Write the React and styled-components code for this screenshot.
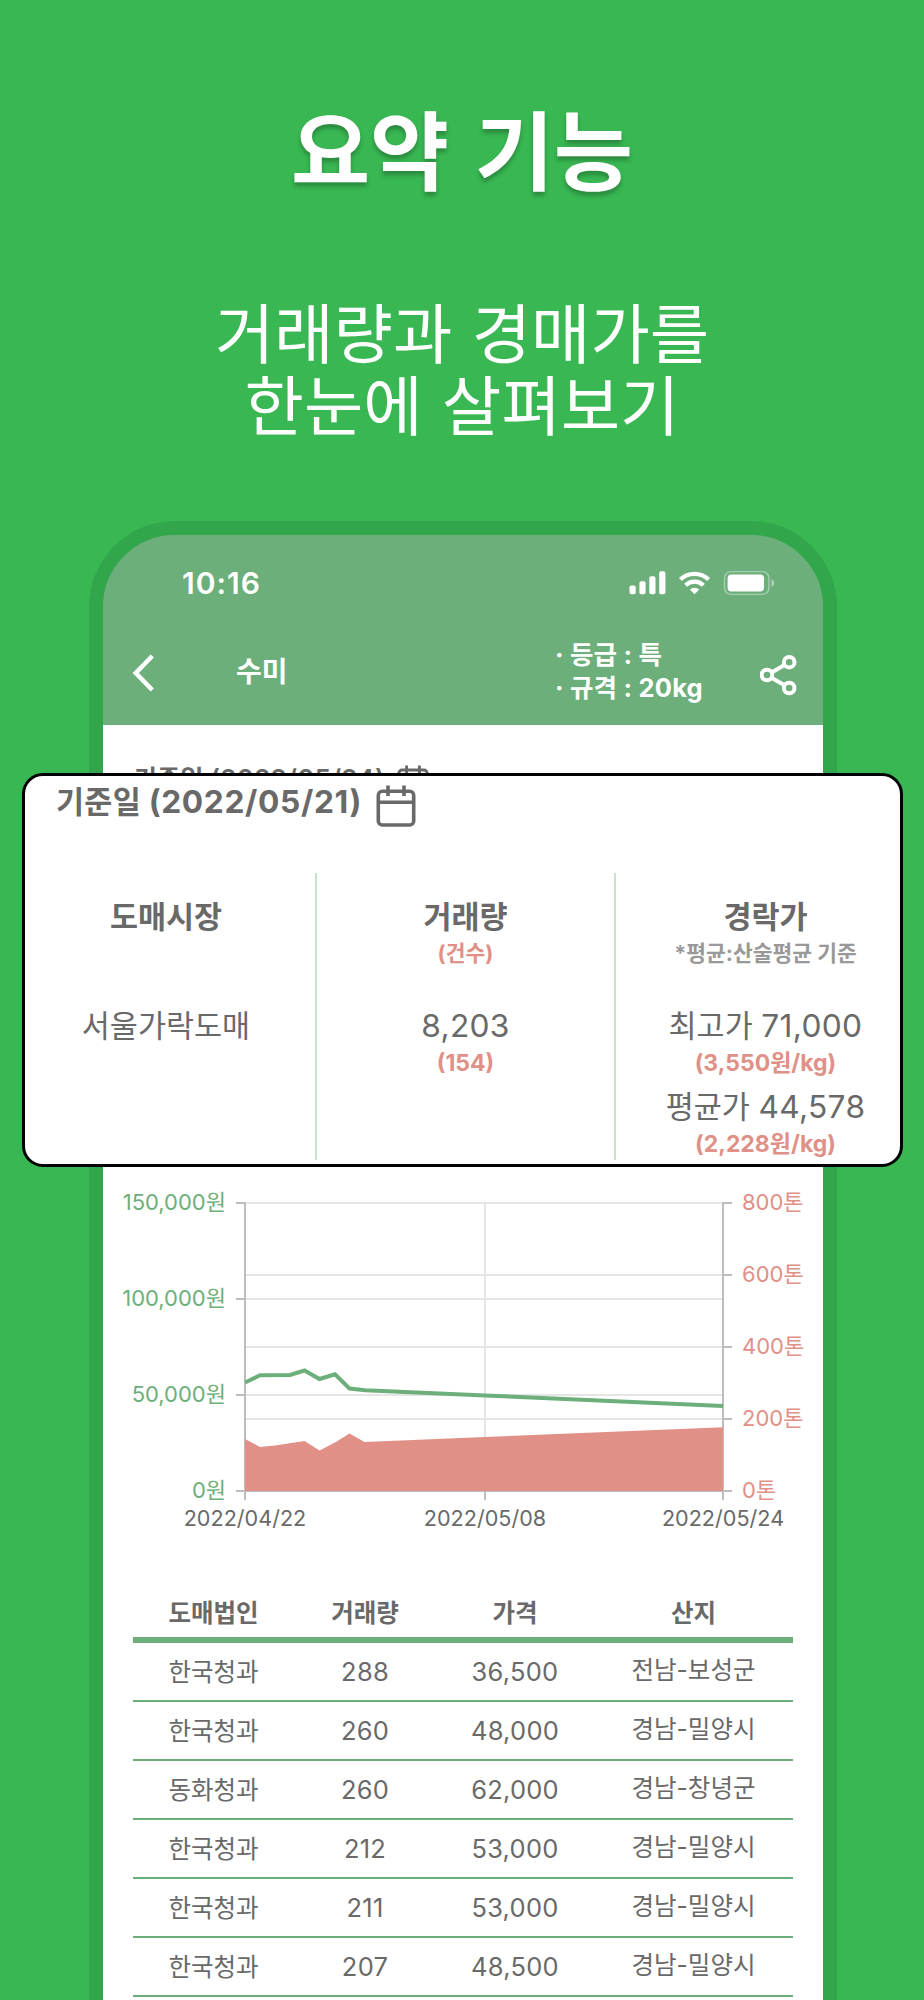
import React from 'react'
import styled, { createGlobalStyle } from 'styled-components'

const GREEN = '#6daf7b'
const SALMON = '#e09087'
const GREY = '#696969'

const GlobalStyle = createGlobalStyle`
  * {
    box-sizing: border-box;
  }
  body {
    margin: 0;
    font-family: Inter, 'Noto Sans CJK KR', sans-serif;
    color: ${GREY};
  }
`

const Page = styled.div`
  position: relative;
  width: 924px;
  height: 2000px;
  overflow: hidden;
  background: #38b752;
`

const Intro = styled.header`
  height: 521px;
  padding-top: 92px;
  text-align: center;
  color: #ffffff;
  font-family: 'Noto Sans CJK KR', sans-serif;
`

const Title = styled.h1`
  margin: 0;
  font-size: 86px;
  line-height: 110px;
  font-weight: 700;
  word-spacing: 6px;
  text-shadow: 0 4px 4px rgba(0, 0, 0, 0.25);
`

const Subtitle = styled.p`
  margin: 92px 0 0;
  font-size: 64.5px;
  line-height: 72px;
  word-spacing: 5px;
`

const Phone = styled.main`
  width: 748px;
  height: 1600px;
  margin-left: 89px;
  border: 14px solid #32a64a;
  border-radius: 86px 86px 0 0;
  background: ${GREEN};
  overflow: hidden;
`

const AppHeader = styled.div`
  height: 190px;
  color: #ffffff;
`

const AppBody = styled.div`
  height: 1396px;
  background: #ffffff;
`

const StatusBar = styled.div`
  display: flex;
  align-items: center;
  justify-content: space-between;
  height: 96px;
  padding: 0 48px 0 79px;
`

const Clock = styled.span`
  font-size: 30px;
  line-height: 36px;
  font-weight: 600;
  letter-spacing: 1px;
`

const NavBar = styled.div`
  display: flex;
  align-items: center;
  height: 84px;
  padding: 0 25px 0 29px;
`

const NavTitle = styled.div`
  flex: 1;
  padding: 0 0 2px 81px;
  font-size: 28px;
  line-height: 34px;
  font-weight: 600;
`

const Specs = styled.div`
  width: 149px;
  margin-right: 56px;
  padding-bottom: 4px;
  font-size: 25.5px;
  line-height: 33px;
  font-weight: 700;
  letter-spacing: 0.2px;
  white-space: nowrap;
`

const DateRow = styled.div`
  display: flex;
  align-items: flex-start;
  gap: ${(p) => p.$gap}px;
  font-size: ${(p) => p.$size}px;
  line-height: 1.2;
  font-weight: ${(p) => p.$weight || 600};
  letter-spacing: 0.01em;
  svg {
    margin-top: 2px;
  }
`

const PhoneDate = styled.div`
  height: 434px;
  padding: 38px 0 0 31px;
`

const ZoomCard = styled.section`
  position: absolute;
  top: 773px;
  left: 22px;
  width: 881px;
  height: 394px;
  padding: 7px 0 0 31px;
  border: 3px solid #000000;
  border-radius: 21px;
  background: #ffffff;
  overflow: hidden;
`

const Summary = styled.div`
  display: grid;
  grid-template-columns: 300px 299px 299px;
  grid-template-rows: 287px;
  margin: 46px 0 0 -39px;
`

const SummaryCol = styled.div`
  padding-top: 25px;
  text-align: center;
  border-right: 2px solid #c5e3ca;
  white-space: nowrap;
  &:last-child {
    border-right: 0;
  }
`

const ColTitle = styled.div`
  font-size: 30.5px;
  line-height: 38px;
  font-weight: 700;
`

const ColNote = styled.div`
  height: 70px;
  font-size: 21.5px;
  line-height: 34px;
  font-weight: 700;
  color: ${(p) => p.$color};
`

const ColValue = styled.div`
  font-size: 30.5px;
  line-height: 40px;
`

const ColSub = styled.div`
  height: 41px;
  font-size: 23px;
  line-height: 34px;
  font-weight: 700;
  color: ${SALMON};
`

const ChartSvg = styled.svg`
  display: block;
  width: 720px;
  height: 381px;
  font-size: 22px;
`

const Table = styled.table`
  width: 660px;
  margin: 44px 0 0 30px;
  border-collapse: separate;
  border-spacing: 0;
  table-layout: fixed;
  font-size: 24.5px;
  line-height: 30px;
  text-align: center;
`

const HeadCell = styled.th`
  width: ${(p) => p.$width}px;
  height: 59px;
  padding: 4px 0 0;
  font-weight: 700;
  border-bottom: 6px solid ${GREEN};
`

const Cell = styled.td`
  height: 59px;
  padding: 0 0 ${(p) => p.$lift || 0}px;
  border-bottom: 2px solid ${GREEN};
`

const Num = styled.span`
  font-size: 1.04em;
  letter-spacing: ${(p) => p.$spacing || 0.01}em;
`

const SignalIcon = () => (
  <svg width="146" height="26" viewBox="0 0 146 26" fill="#ffffff">
    <rect x="0.5" y="15.5" width="6.2" height="8.700" rx="1.8" />
    <rect x="10.4" y="11.200" width="6.2" height="13" rx="1.8" />
    <rect x="20.3" y="6.200" width="6.2" height="18" rx="1.8" />
    <rect x="30.2" y="1.200" width="6.2" height="23" rx="1.8" />
    <g fill="none" stroke="#ffffff" strokeWidth="4.2">
      <path d="M51.400 9.500a20.500 20.500 0 0 1 28.200 0" />
      <path d="M56.600 15.200a12.700 12.700 0 0 1 17.800 0" />
    </g>
    <path d="M65.5 24.300l-4.7-4.700a7 7 0 0 1 9.400 0z" />
    <rect x="95.5" y="1.6" width="44.500" height="22.8" rx="6.5" fill="none" stroke="#ffffff" strokeOpacity="0.4" strokeWidth="1.4" />
    <rect x="98.6" y="4.4" width="36.400" height="17.2" rx="3.800" />
    <path d="M142.500 9.2c1.8.7 2.7 2.2 2.7 3.8s-.9 3.1-2.7 3.8z" opacity="0.45" />
  </svg>
)

const BackIcon = () => (
  <svg width="23" height="38" viewBox="0 0 23 38" fill="none" stroke="#ffffff" strokeWidth="4.6">
    <path d="M20.3 2L3.8 19l16.5 17" />
  </svg>
)

const ShareIcon = () => (
  <svg width="38" height="46" viewBox="0 0 38 46" fill="none" stroke="#ffffff" strokeWidth="4">
    <circle cx="7" cy="25" r="5.3" />
    <circle cx="29.2" cy="12.2" r="5.3" />
    <circle cx="29.2" cy="38" r="5.3" />
    <path d="M12 22.2l12.500-7.2M12 27.9l12.500 7.300" />
  </svg>
)

const CalendarIcon = ({ size }) => (
  <svg width={size} height={size * 1.05} viewBox="0 0 40 42" fill="none" stroke={GREY} strokeWidth="3.6">
    <rect x="2.3" y="6.3" width="35.4" height="33.7" rx="4" />
    <path d="M2.3 17.3h35.4M12 0.5v10.5M28 0.5v10.5" />
  </svg>
)

const priceAxis = [
  { y: 1203, label: '150,000원' },
  { y: 1299, label: '100,000원' },
  { y: 1395, label: '50,000원' },
  { y: 1491, label: '0원' },
]

const volumeAxis = [
  { y: 1203, label: '800톤' },
  { y: 1275, label: '600톤' },
  { y: 1347, label: '400톤' },
  { y: 1419, label: '200톤' },
  { y: 1491, label: '0톤' },
]

const dateAxis = [
  { x: 245, label: '2022/04/22' },
  { x: 485, label: '2022/05/08' },
  { x: 723, label: '2022/05/24' },
]

const pricePoints =
  '245,1382.5 260,1375.3 290,1375 304.5,1370.5 319.5,1379 335,1374.3 349.5,1388.5 365,1390.2 485,1395.5 723,1406'
const volumePoints =
  '245,1439 260,1447 275,1445.5 304.5,1441 319.5,1450.5 335,1442.5 349.5,1433.5 364.5,1442 485,1437 723,1427.3 723,1491 245,1491'

// the viewBox is offset so that the points stay in page units
const Chart = () => (
  <ChartSvg viewBox="103 1159 720 381">
    <g stroke="#e5e5e5" strokeWidth="2">
      {[1203, 1275, 1299, 1347, 1395, 1419].map((y) => (
        <path key={y} d={`M245 ${y}H723`} />
      ))}
      <path d="M485 1203V1491" />
    </g>
    <g stroke="#bdbdbd" strokeWidth="2">
      <path d="M245 1202V1500M723 1202V1500M485 1491V1500M245 1491H723" />
      {priceAxis.map((t) => (
        <path key={t.y} d={`M236 ${t.y}H245`} />
      ))}
      {volumeAxis.map((t) => (
        <path key={t.y} d={`M723 ${t.y}H732`} />
      ))}
    </g>
    <polygon points={volumePoints} fill={SALMON} />
    <polyline points={pricePoints} fill="none" stroke={GREEN} strokeWidth="4" />
    {priceAxis.map((t) => (
      <text key={t.y} x="226" y={t.y + 7} textAnchor="end" fill={GREEN}>{t.label}</text>
    ))}
    {volumeAxis.map((t) => (
      <text key={t.y} x="742" y={t.y + 7} fill={SALMON}>{t.label}</text>
    ))}
    {dateAxis.map((t) => (
      <text key={t.x} x={t.x} y="1526" fontSize="21.6" textAnchor="middle" fill={GREY}>{t.label}</text>
    ))}
  </ChartSvg>
)

const columns = [
  { title: '도매법인', width: 161 },
  { title: '거래량', width: 142 },
  { title: '가격', width: 158 },
  { title: '산지', width: 199 },
]

const rows = [
  ['한국청과', '288', '36,500', '전남-보성군'],
  ['한국청과', '260', '48,000', '경남-밀양시'],
  ['동화청과', '260', '62,000', '경남-창녕군'],
  ['한국청과', '212', '53,000', '경남-밀양시'],
  ['한국청과', '211', '53,000', '경남-밀양시'],
  ['한국청과', '207', '48,500', '경남-밀양시'],
]

const App = () => {
  return (
    <Page>
      <GlobalStyle />
      <Intro>
        <Title>요약 기능</Title>
        <Subtitle>
          거래량과 경매가를<br />한눈에 살펴보기
        </Subtitle>
      </Intro>

      <Phone>
        <AppHeader>
          <StatusBar>
            <Clock>10:16</Clock>
            <SignalIcon />
          </StatusBar>
          <NavBar>
            <BackIcon />
            <NavTitle>수미</NavTitle>
            <Specs>
              <div>· 등급 : 특</div>
              <div>· 규격 : 20kg</div>
            </Specs>
            <ShareIcon />
          </NavBar>
        </AppHeader>
        <AppBody>
          <PhoneDate>
            <DateRow $size={25} $gap={12}>
              <span>기준일 <Num>(2022/05/24)</Num></span>
              <CalendarIcon size={32} />
            </DateRow>
          </PhoneDate>
          <Chart />
          <Table>
            <thead>
              <tr>
                {columns.map((c) => (
                  <HeadCell key={c.title} $width={c.width}>{c.title}</HeadCell>
                ))}
              </tr>
            </thead>
            <tbody>
              {rows.map((row, index) => (
                <tr key={`row-${index}`}>
                  <Cell>{row[0]}</Cell>
                  <Cell><Num>{row[1]}</Num></Cell>
                  <Cell><Num>{row[2]}</Num></Cell>
                  <Cell $lift={3}>{row[3]}</Cell>
                </tr>
              ))}
            </tbody>
          </Table>
        </AppBody>
      </Phone>

      <ZoomCard>
        <DateRow $size={30.5} $gap={14} $weight={700}>
          <span>기준일 <Num $spacing={0.02}>(2022/05/21)</Num></span>
          <CalendarIcon size={40} />
        </DateRow>
        <Summary>
          <SummaryCol>
            <ColTitle>도매시장</ColTitle>
            <ColNote />
            <ColValue>서울가락도매</ColValue>
          </SummaryCol>
          <SummaryCol>
            <ColTitle>거래량</ColTitle>
            <ColNote $color={SALMON}>(건수)</ColNote>
            <ColValue><Num>8,203</Num></ColValue>
            <ColSub>(154)</ColSub>
          </SummaryCol>
          <SummaryCol>
            <ColTitle>경락가</ColTitle>
            <ColNote $color="#999999">*평균:산술평균 기준</ColNote>
            <ColValue>최고가 <Num>71,000</Num></ColValue>
            <ColSub>(3,550원/kg)</ColSub>
            <ColValue>평균가 <Num>44,578</Num></ColValue>
            <ColSub>(2,228원/kg)</ColSub>
          </SummaryCol>
        </Summary>
      </ZoomCard>
    </Page>
  )
}

export default App
